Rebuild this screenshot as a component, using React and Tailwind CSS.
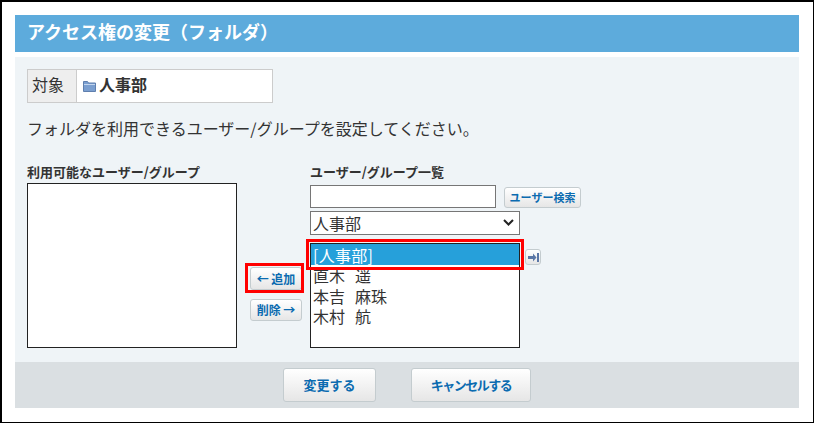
const btn = "border border-[#c4cccf] rounded-[3px] bg-gradient-to-b from-[#ffffff] to-[#e6e6e6] text-[#0b6bb0] font-bold flex items-center justify-center whitespace-nowrap"

function FolderIcon() {
  return (
    <svg width="13" height="12" viewBox="0 0 13 12" className="mr-[3px] mt-[3px] shrink-0">
      <path d="M0.5 1.5h4l1 1.5h7v8.5h-12z" fill="#7b9fd0" stroke="#5f7fae" />
      <rect x="1" y="4" width="11" height="1" fill="#c4d6ee" />
    </svg>
  )
}

function MoveIcon() {
  return (
    <svg width="11" height="9" viewBox="0 0 11 9">
      <path d="M0 3h5V0.5L8.5 4.5 5 8.5V6H0z" fill="#5a76a6" />
      <rect x="9" y="0" width="2" height="9" fill="#5a76a6" />
    </svg>
  )
}

export default function App() {
  return (
    <div
      className="w-[814px] h-[423px] bg-white border-t-2 border-l-2 border-r-[1px] border-b-[1px] border-black pt-[13px] pl-[13px] pr-[14px] text-[#333]"
      style={{ fontFamily: '"Noto Sans CJK JP", "Liberation Sans", sans-serif' }}
    >
      <div className="h-[37px] bg-[#5dabdc] text-white font-bold text-[18px] leading-[33px] pl-[12px]">
        アクセス権の変更（フォルダ）
      </div>

      <div className="mt-[5px] h-[305px] bg-[#eff4f7] pl-[12px] pt-[12px]">
        <div className="flex w-[246px] h-[34px] border border-[#ccc] bg-white text-[16px]">
          <div className="w-[49px] bg-[#eee] border-r border-[#ccc] flex items-center pl-[4px] pb-[4px]">対象</div>
          <div className="flex items-center pl-[6px] pb-[4px] font-bold">
            <FolderIcon />
            人事部
          </div>
        </div>

        <p className="mt-[13px] text-[16px] leading-[24px]">フォルダを利用できるユーザー/グループを設定してください。</p>

        <div className="flex mt-[23px]">
          <div className="w-[210px]">
            <div className="h-[18px] text-[13px] font-bold leading-[18px] whitespace-nowrap">利用可能なユーザー/グループ</div>
            <div className="mt-[2px] h-[165px] border border-[#222] bg-white"></div>
          </div>

          <div className="w-[73px] pl-[13px] pt-[104px] relative">
            <div className={btn + " w-[52px] h-[23px] text-[12px]"}>← 追加</div>
            <div className={btn + " w-[52px] h-[22px] text-[12px] mt-[9px]"}>削除 →</div>
            <div className="absolute left-[8px] top-[100px] w-[59px] h-[30px] border-[3px] border-[#ff0000]"></div>
          </div>

          <div className="w-[272px]">
            <div className="h-[18px] text-[13px] font-bold leading-[18px] whitespace-nowrap">ユーザー/グループ一覧</div>
            <div className="flex items-end mt-[4px]">
              <div className="w-[186px] h-[23px] border border-[#767676] bg-white"></div>
              <div className={btn + " w-[77px] h-[21px] ml-[8px] text-[11px]"}>ユーザー検索</div>
            </div>
            <div className="flex items-center justify-between w-[210px] h-[24px] mt-[3px] border border-[#767676] bg-white text-[16px] pl-[2px] pr-[5px] pb-[1px]">
              人事部
              <svg width="11" height="7" viewBox="0 0 11 7">
                <path d="M1 1l4.5 4.5L10 1" fill="none" stroke="#222" strokeWidth="2" />
              </svg>
            </div>
            <div className="flex items-start mt-[8px] relative">
              <div className="w-[210px] h-[105px] border border-[#222] bg-white text-[16px] leading-[20.5px]">
                <div className="bg-[#26a0da] text-white pl-[2px] h-[21px] leading-[23px] tracking-[0.3px]">[人事部]</div>
                <div className="pl-[2px]">直木<span className="ml-[10px]">遥</span></div>
                <div className="pl-[2px]">本吉<span className="ml-[10px]">麻珠</span></div>
                <div className="pl-[2px]">木村<span className="ml-[10px]">航</span></div>
              </div>
              <div className={btn + " w-[16px] h-[16px] ml-[5px] mt-[6px]"}>
                <MoveIcon />
              </div>
              <div className="absolute left-[-4px] top-[-4px] w-[218px] h-[31px] border-[3px] border-[#ff0000]"></div>
            </div>
          </div>
        </div>
      </div>

      <div className="h-[46px] bg-[#dadfe2] flex items-start pt-[6px] pl-[268px]">
        <div className={btn + " w-[93px] h-[34px] text-[13px]"}>変更する</div>
        <div className={btn + " w-[120px] h-[34px] text-[13px] tracking-[-1.5px] ml-[35px]"}>キャンセルする</div>
      </div>
    </div>
  )
}
